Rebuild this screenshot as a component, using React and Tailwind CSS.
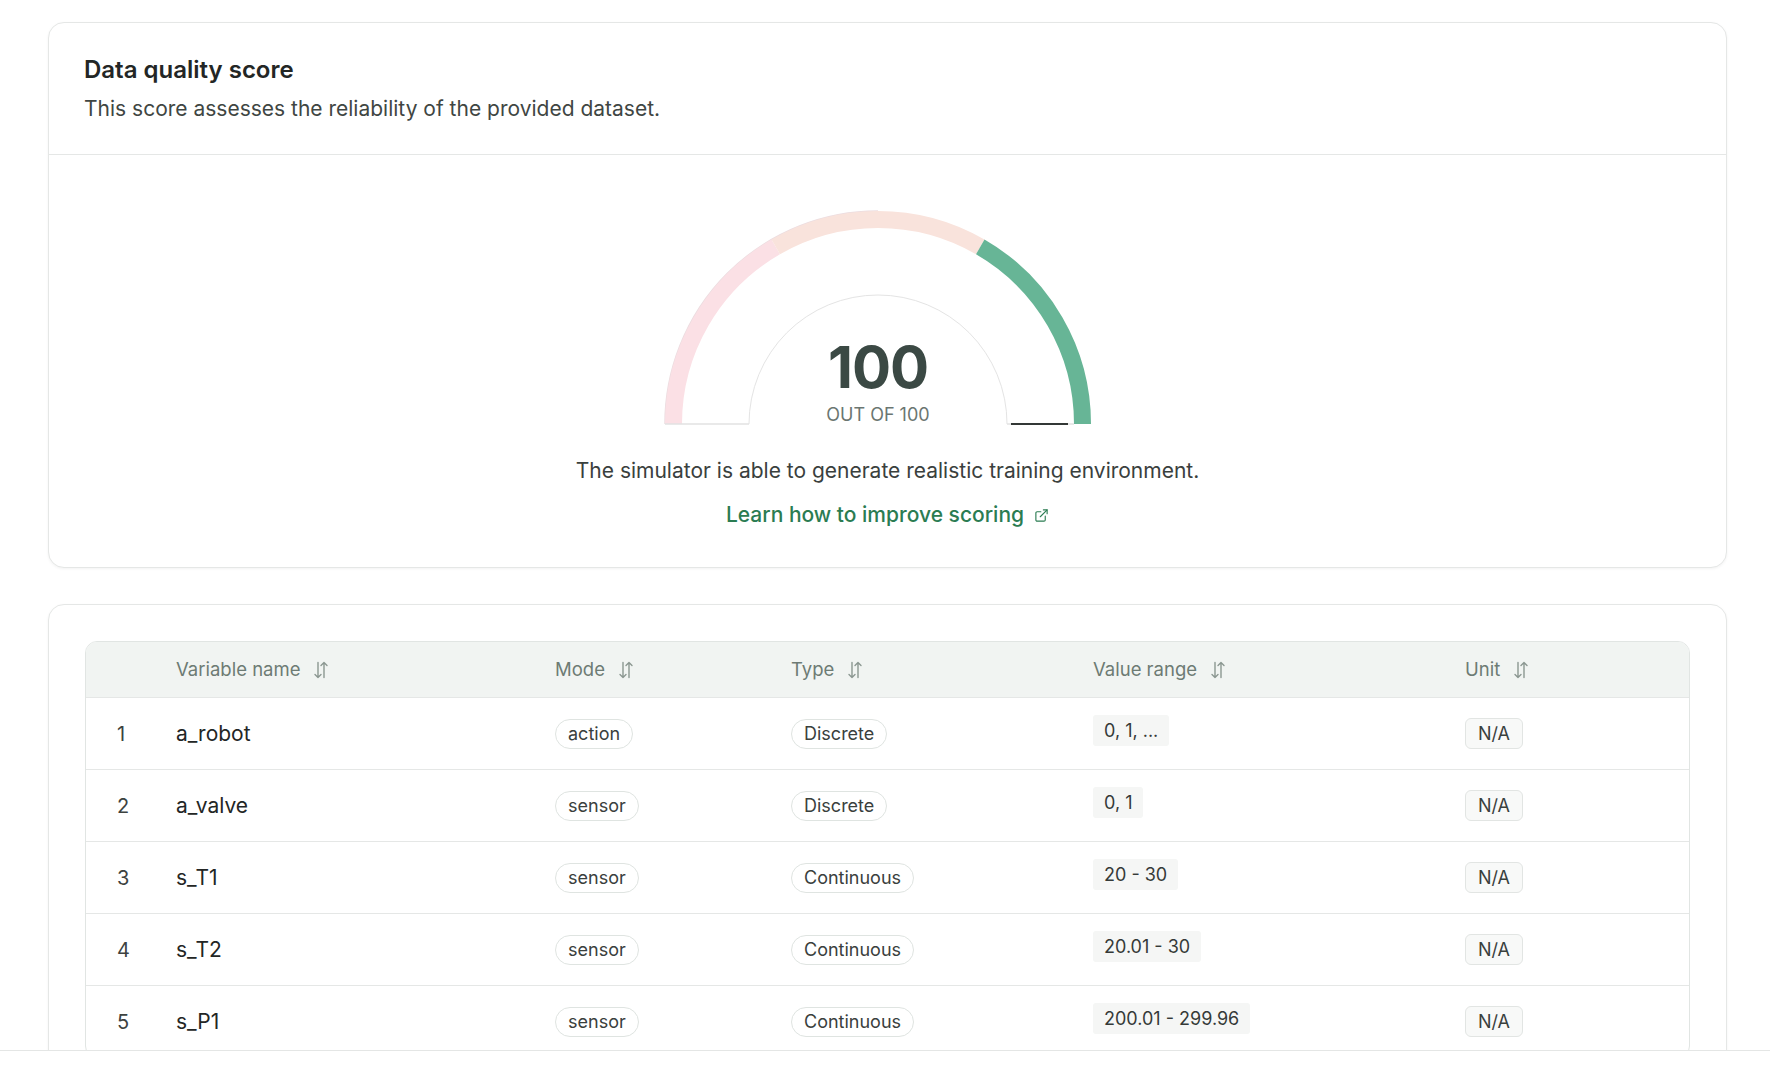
import { ExternalLink } from 'lucide-react';

const rows = [
  { n: 1, name: 'a_robot', mode: 'action', type: 'Discrete', range: '0, 1, ...' },
  { n: 2, name: 'a_valve', mode: 'sensor', type: 'Discrete', range: '0, 1' },
  { n: 3, name: 's_T1', mode: 'sensor', type: 'Continuous', range: '20 - 30' },
  { n: 4, name: 's_T2', mode: 'sensor', type: 'Continuous', range: '20.01 - 30' },
  { n: 5, name: 's_P1', mode: 'sensor', type: 'Continuous', range: '200.01 - 299.96' },
];

function SortIcon() {
  return (
    <svg width="18" height="20" viewBox="0 0 18 20" fill="none" stroke="#8b9791" strokeWidth="1.4" strokeLinecap="round" strokeLinejoin="round">
      <path d="M6 2.5v15M3 14.5l3 3 3-3" />
      <path d="M12 17.5v-15M9 5.5l3-3 3 3" />
    </svg>
  );
}

function Gauge() {
  // center of the half donut
  const cx = 215;
  const cy = 214;
  const r = 204.5;
  const pt = (deg) => {
    const a = (deg * Math.PI) / 180;
    return `${(cx + r * Math.cos(a)).toFixed(2)} ${(cy - r * Math.sin(a)).toFixed(2)}`;
  };
  const arc = (from, to) => `M ${pt(from)} A ${r} ${r} 0 0 1 ${pt(to)}`;

  return (
    <div className="relative w-[430px] h-[216px] mr-[19px]">
      <svg width="430" height="216" viewBox="0 0 430 216" fill="none">
        <path d={`M ${cx - 213} ${cy} A 213 213 0 0 1 ${cx} ${cy - 213}`} stroke="#ecdde0" strokeWidth="1.5" />
        <path d={arc(180, 120)} stroke="#fbe0e5" strokeWidth="17" />
        <path d={arc(120, 60)} stroke="#f9e3dc" strokeWidth="17" />
        <path d={arc(60, 0)} stroke="#67b596" strokeWidth="17" />
        <path d={`M ${cx - 129} ${cy} A 129 129 0 0 1 ${cx + 129} ${cy}`} stroke="#e4e4e4" strokeWidth="1" />
        <path d={`M ${cx - 213} ${cy} H ${cx - 129}`} stroke="#e2e2e2" strokeWidth="1.5" />
        <path d={`M ${cx + 129} ${cy} H ${cx + 196}`} stroke="#e2e2e2" strokeWidth="1.5" />
        <path d={`M ${cx + 133} ${cy} H ${cx + 190}`} stroke="#333836" strokeWidth="2" />
      </svg>
      <div className="absolute left-0 right-0 top-[122px] flex flex-col items-center">
        <div className="text-[58px] leading-[70px] font-bold text-[#3b4944] tracking-[-1px]">100</div>
        <div className="text-[18px] leading-[24px] text-[#6b7671] mt-[1px]">OUT OF 100</div>
      </div>
    </div>
  );
}

function Pill({ children }) {
  return (
    <span className="inline-flex items-center h-[30px] px-[12px] rounded-full border border-[#dfe4e1] text-[18px] text-[#3a403d]">
      {children}
    </span>
  );
}

export default function App() {
  return (
    <div className="bg-white min-h-[1084px] font-['Inter',sans-serif]">
      <div className="h-[1051px] overflow-hidden border-b border-[#e4e6e5] pl-[48px] pr-[43px] pt-[22px] flex flex-col gap-[36px]">
        {/* Score card */}
        <section className="rounded-2xl border border-[#e5e7e6] bg-white shadow-[0_1px_3px_rgba(0,0,0,0.05)] shrink-0">
          <div className="px-[35px] pt-[33px] pb-[31px] border-b border-[#e5e7e6]">
            <h2 className="text-[24px] leading-[28px] font-semibold text-[#232625]">Data quality score</h2>
            <p className="mt-[11px] text-[21px] leading-[28px] text-[#3f4643]">This score assesses the reliability of the provided dataset.</p>
          </div>
          <div className="flex flex-col items-center pt-[55px] pb-[38px]">
            <Gauge />
            <p className="mt-[31px] text-[21px] leading-[28px] text-[#3a403d]">
              The simulator is able to generate realistic training environment.
            </p>
            <a className="mt-[16px] flex items-center gap-[10px] text-[21px] leading-[28px] font-medium text-[#2b7c52]">
              Learn how to improve scoring
              <ExternalLink className="w-[15px] h-[15px]" strokeWidth={1.8} />
            </a>
          </div>
        </section>

        {/* Variables card */}
        <section className="rounded-2xl border border-[#e5e7e6] bg-white shadow-[0_1px_3px_rgba(0,0,0,0.05)] p-[36px] shrink-0">
          <div className="rounded-xl border border-[#e1e5e3] overflow-hidden">
            <div className="grid grid-cols-[90px_379px_236px_302px_372px_1fr] h-[55px] items-center bg-[#f1f4f2] text-[18.5px] text-[#6d7b74]">
              <div />
              <div className="flex items-center gap-[12px]">Variable name <SortIcon /></div>
              <div className="flex items-center gap-[12px]">Mode <SortIcon /></div>
              <div className="flex items-center gap-[12px]">Type <SortIcon /></div>
              <div className="flex items-center gap-[12px]">Value range <SortIcon /></div>
              <div className="flex items-center gap-[12px]">Unit <SortIcon /></div>
            </div>
            {rows.map((row) => (
              <div
                key={row.n}
                className="grid grid-cols-[90px_379px_236px_302px_372px_1fr] h-[72px] items-center border-t border-[#e5e7e6]"
              >
                <div className="pl-[31px] text-[20px] text-[#3d4240]">{row.n}</div>
                <div className="text-[21px] text-[#232625]">{row.name}</div>
                <div><Pill>{row.mode}</Pill></div>
                <div><Pill>{row.type}</Pill></div>
                <div className="-mt-[6px]">
                  <span className="inline-flex items-center h-[31px] px-[11px] rounded-[3px] bg-[#f5f6f5] text-[18px] text-[#353a38]">
                    {row.range}
                  </span>
                </div>
                <div>
                  <span className="inline-flex items-center h-[31px] px-[12px] rounded-md border border-[#e2e5e3] bg-[#f8f9f8] text-[18px] text-[#3a403d]">
                    N/A
                  </span>
                </div>
              </div>
            ))}
          </div>
        </section>
      </div>
    </div>
  );
}
